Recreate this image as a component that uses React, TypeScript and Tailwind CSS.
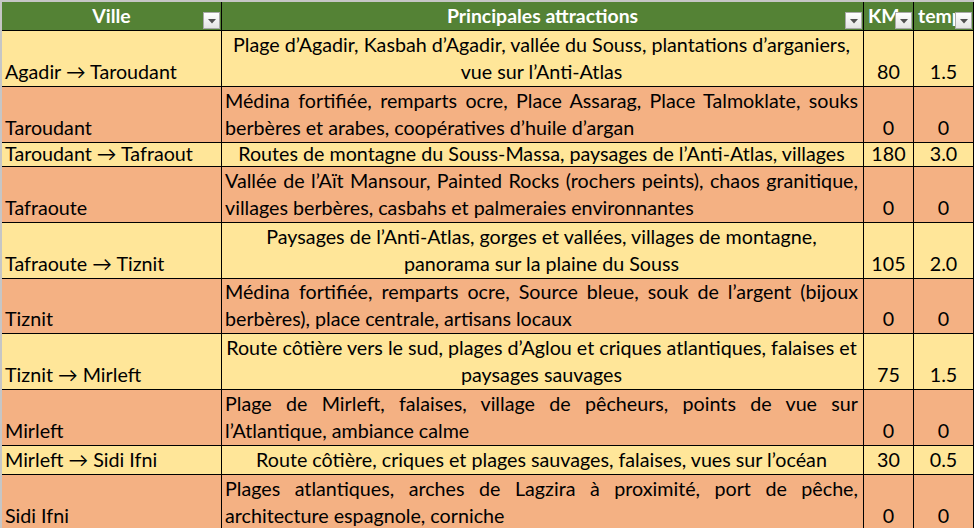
import React from 'react';

type Row = {
  ville: string;
  lines: string[];
  justify: boolean;
  km: string;
  temps: string;
  tone: 'yellow' | 'orange';
  h: string;
  lh: string;
};

const rows: Row[] = [
  {
    ville: 'Agadir → Taroudant',
    lines: ['Plage d’Agadir, Kasbah d’Agadir, vallée du Souss, plantations d’arganiers,', 'vue sur l’Anti-Atlas'],
    justify: false,
    km: '80',
    temps: '1.5',
    tone: 'yellow',
    h: 'h-[55px]',
    lh: 'leading-[27px]',
  },
  {
    ville: 'Taroudant',
    lines: ['Médina fortifiée, remparts ocre, Place Assarag, Place Talmoklate, souks', 'berbères et arabes, coopératives d’huile d’argan'],
    justify: true,
    km: '0',
    temps: '0',
    tone: 'orange',
    h: 'h-[55px]',
    lh: 'leading-[27px]',
  },
  {
    ville: 'Taroudant → Tafraout',
    lines: ['Routes de montagne du Souss-Massa, paysages de l’Anti-Atlas, villages'],
    justify: false,
    km: '180',
    temps: '3.0',
    tone: 'yellow',
    h: 'h-[23px]',
    lh: 'leading-[22px]',
  },
  {
    ville: 'Tafraoute',
    lines: ['Vallée de l’Aït Mansour, Painted Rocks (rochers peints), chaos granitique,', 'villages berbères, casbahs et palmeraies environnantes'],
    justify: true,
    km: '0',
    temps: '0',
    tone: 'orange',
    h: 'h-[55px]',
    lh: 'leading-[27px]',
  },
  {
    ville: 'Tafraoute → Tiznit',
    lines: ['Paysages de l’Anti-Atlas, gorges et vallées, villages de montagne,', 'panorama sur la plaine du Souss'],
    justify: false,
    km: '105',
    temps: '2.0',
    tone: 'yellow',
    h: 'h-[55px]',
    lh: 'leading-[27px]',
  },
  {
    ville: 'Tiznit',
    lines: ['Médina fortifiée, remparts ocre, Source bleue, souk de l’argent (bijoux', 'berbères), place centrale, artisans locaux'],
    justify: true,
    km: '0',
    temps: '0',
    tone: 'orange',
    h: 'h-[54px]',
    lh: 'leading-[27px]',
  },
  {
    ville: 'Tiznit → Mirleft',
    lines: ['Route côtière vers le sud, plages d’Aglou et criques atlantiques, falaises et', 'paysages sauvages'],
    justify: false,
    km: '75',
    temps: '1.5',
    tone: 'yellow',
    h: 'h-[55px]',
    lh: 'leading-[27px]',
  },
  {
    ville: 'Mirleft',
    lines: ['Plage de Mirleft, falaises, village de pêcheurs, points de vue sur', 'l’Atlantique, ambiance calme'],
    justify: true,
    km: '0',
    temps: '0',
    tone: 'orange',
    h: 'h-[55px]',
    lh: 'leading-[27px]',
  },
  {
    ville: 'Mirleft → Sidi Ifni',
    lines: ['Route côtière, criques et plages sauvages, falaises, vues sur l’océan'],
    justify: false,
    km: '30',
    temps: '0.5',
    tone: 'yellow',
    h: 'h-[28px]',
    lh: 'leading-[27px]',
  },
  {
    ville: 'Sidi Ifni',
    lines: ['Plages atlantiques, arches de Lagzira à proximité, port de pêche,', 'architecture espagnole, corniche'],
    justify: true,
    km: '0',
    temps: '0',
    tone: 'orange',
    h: 'h-[55px]',
    lh: 'leading-[27px]',
  },
];

function FilterButton() {
  return (
    <span className="absolute right-[1px] bottom-[1px] flex h-[17px] w-[17px] items-center justify-center border border-[#a9a9a9] bg-gradient-to-b from-white to-[#e4e4e4]">
      <svg width="8" height="5" viewBox="0 0 8 5" className="mt-[2px]">
        <path d="M0 0 L8 0 L4 4.5 Z" fill="#505050" />
      </svg>
    </span>
  );
}

function HeaderCell({ label, align = 'center' }: { label: string; align?: 'center' | 'left' }) {
  return (
    <div
      className={`relative flex h-[28px] items-end overflow-hidden bg-[#548235] pb-[1px] text-[19.4px] font-bold leading-[26px] text-white ${
        align === 'center' ? 'justify-center' : 'justify-start pl-[4px]'
      }`}
    >
      <span className="whitespace-nowrap">{label}</span>
      <FilterButton />
    </div>
  );
}

export default function App() {
  const cellBg = (tone: Row['tone']) => (tone === 'yellow' ? 'bg-[#ffe699]' : 'bg-[#f4b183]');

  return (
    <div className="h-[528px] w-[974px] overflow-hidden bg-white font-['Lato','Liberation_Sans',sans-serif] text-black">
      <div className="border-t-2 border-l-2 border-[#c6c6c6]">
        <div className="grid w-[1000px] grid-cols-[219px_641px_49px_59px_30px] gap-[1px] bg-black">
          <HeaderCell label="Ville" />
          <HeaderCell label="Principales attractions" />
          <HeaderCell label="KMs" align="left" />
          <HeaderCell label="temps" align="left" />
          <div className="bg-white" />

          {rows.map((r) => (
            <React.Fragment key={r.ville}>
              <div className={`${cellBg(r.tone)} ${r.h} ${r.lh} flex items-end overflow-hidden pl-[3px] pb-[1px] text-[19.7px] whitespace-nowrap`}>
                {r.ville}
              </div>
              <div className={`${cellBg(r.tone)} ${r.h} ${r.lh} flex flex-col justify-end overflow-hidden pl-[3px] pr-[5px] pb-[1px] text-[19.7px]`}>
                {r.lines.map((line, i) => {
                  const last = i === r.lines.length - 1 && r.lines.length > 1;
                  if (r.justify) {
                    return (
                      <div
                        key={i}
                        className={last ? 'text-left whitespace-nowrap' : 'text-justify [text-align-last:justify]'}
                      >
                        {line}
                      </div>
                    );
                  }
                  return (
                    <div key={i} className="text-center whitespace-nowrap">
                      {line}
                    </div>
                  );
                })}
              </div>
              <div className={`${cellBg(r.tone)} ${r.h} ${r.lh} flex items-end justify-center pb-[1px] text-[19.7px]`}>
                {r.km}
              </div>
              <div className={`${cellBg(r.tone)} ${r.h} ${r.lh} flex items-end justify-center pb-[1px] text-[19.7px]`}>
                {r.temps}
              </div>
              <div className={`bg-white ${r.h}`} />
            </React.Fragment>
          ))}
        </div>
      </div>
    </div>
  );
}
